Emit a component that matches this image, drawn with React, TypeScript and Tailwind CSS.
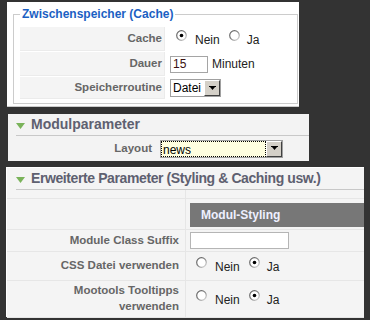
import React from 'react';

const labelCls =
  "text-[11.5px] font-bold text-[#666] font-['Liberation_Sans',Arial,sans-serif]";
const valueCls = "text-[12px] text-[#222] font-['Liberation_Sans',Arial,sans-serif]";

function Radio({ checked }: { checked?: boolean }) {
  return (
    <svg width="11" height="11" viewBox="0 0 11 11" className="shrink-0">
      <defs>
        <linearGradient id="rg" x1="0" y1="0" x2="1" y2="1">
          <stop offset="0" stopColor="#555" />
          <stop offset="0.55" stopColor="#888" />
          <stop offset="1" stopColor="#e6e6e6" />
        </linearGradient>
      </defs>
      <circle cx="5.5" cy="5.5" r="4.8" fill="#fff" stroke="url(#rg)" strokeWidth="1.2" />
      {checked && <circle cx="5.5" cy="5.5" r="1.8" fill="#000" />}
    </svg>
  );
}

function YesNo({ yes }: { yes: boolean }) {
  return (
    <div className={`flex items-start ${valueCls}`}>
      <Radio checked={!yes} />
      <span className="ml-[8px] mt-[4px] leading-[12px]">Nein</span>
      <span className="ml-[9px]">
        <Radio checked={yes} />
      </span>
      <span className="ml-[7px] mt-[4px] leading-[12px]">Ja</span>
    </div>
  );
}

function DropButton() {
  return (
    <div className="w-[16px] h-full bg-[#d4d0c8] border-t border-l border-t-white border-l-white border-b border-r border-b-[#404040] border-r-[#404040] flex items-center justify-center">
      <svg width="7" height="5" viewBox="0 0 7 5">
        <rect x="0" y="0" width="7" height="1" fill="#000" />
        <polygon points="1,1 6,1 3.5,4" fill="#000" />
      </svg>
    </div>
  );
}

function Toggler({ title, bold }: { title: string; bold?: boolean }) {
  return (
    <div className="h-[22px] border-b border-[#c8c8c8] flex items-center">
      <svg width="9" height="6" viewBox="0 0 9 6" className="mt-[2px]">
        <polygon points="0,0 9,0 4.5,6" fill="#7ab35a" />
      </svg>
      <span
        className={`ml-[6px] text-[14px] text-[#5e6070] font-['Liberation_Sans',Arial,sans-serif] ${
          bold ? 'font-bold' : 'font-bold tracking-[-0.4px]'
        }`}
      >
        {title}
      </span>
    </div>
  );
}

function CacheRow({ label, h, children }: { label: string; h: string; children: React.ReactNode }) {
  return (
    <div className={`flex ${h} border-b border-white`}>
      <div
        className={`w-[145px] shrink-0 bg-[#f4f4f4] border-r border-b border-[#ebebeb] flex items-center justify-end pr-[2px] ${labelCls}`}
      >
        {label}
      </div>
      <div className="flex items-center">{children}</div>
    </div>
  );
}

function ParamRow({ label, h, children }: { label?: React.ReactNode; h: string; children?: React.ReactNode }) {
  return (
    <div className={`flex ${h}`}>
      <div
        className={`w-[179px] shrink-0 border-r border-b border-[#e6e6e6] flex items-center justify-end text-right pr-[6px] ${labelCls}`}
      >
        {label}
      </div>
      <div className="flex-1 border-b border-[#e6e6e6] flex items-center">{children}</div>
    </div>
  );
}

export default function App() {
  return (
    <div className="w-[370px] h-[320px] bg-[#333] overflow-hidden pt-[2px]">
      {/* Zwischenspeicher */}
      <div className="ml-[7px] w-[292px] h-[105px] bg-white border-b border-[#ccc] pt-[5px]">
        <fieldset className="ml-[6px] w-[285px] border border-[#ccc] px-[6px] pt-[6px] pb-[3px]">
          <legend className="px-[2px] ml-[0px] text-[12px] leading-[14px] font-bold text-[#1b5fc3] font-['Liberation_Sans',Arial,sans-serif]">
            Zwischenspeicher (Cache)
          </legend>
          <CacheRow label="Cache" h="h-[25px]">
            <div className="pl-[11px] -mt-[2px]">
              <YesNo yes={false} />
            </div>
          </CacheRow>
          <CacheRow label="Dauer" h="h-[25px]">
            <div className={`pl-[5px] flex items-center ${valueCls}`}>
              <div className="w-[38px] h-[17px] border border-[#a5a5a5] bg-white pl-[2px] leading-[15px] text-[#3a1010]">
                15
              </div>
              <span className="ml-[4px]">Minuten</span>
            </div>
          </CacheRow>
          <CacheRow label="Speicherroutine" h="h-[23px]">
            <div className={`ml-[5px] w-[51px] h-[18px] border border-[#a0a0a0] bg-white flex ${valueCls}`}>
              <span className="flex-1 pl-[2px] leading-[16px] text-black">Datei</span>
              <DropButton />
            </div>
          </CacheRow>
        </fieldset>
      </div>

      {/* Modulparameter */}
      <div className="ml-[8px] mt-[7px] w-[301px] bg-[#f3f3f3] pl-[8px] pr-0">
        <Toggler title="Modulparameter" bold />
      </div>
      <div className="ml-[8px] w-[301px] h-[25px] bg-[#f3f3f3] flex items-center">
        <div className={`w-[148px] text-right pr-[4px] ${labelCls}`}>Layout</div>
        <div className={`ml-[4px] w-[123px] h-[18px] border border-[#a0a0a0] flex bg-[#ffffe0] ${valueCls}`}>
          <span className="flex-1 border border-dotted border-black leading-[14px] pl-[1px] pt-[1px] text-black">
            news
          </span>
          <DropButton />
        </div>
      </div>

      {/* Erweiterte Parameter */}
      <div className="ml-[6px] mt-[6px] w-[358px] h-[150px] bg-[#f4f4f4] border-l border-t border-white">
        <div className="pl-[9px]">
          <Toggler title="Erweiterte Parameter (Styling & Caching usw.)" />
        </div>
        <ParamRow h="h-[9px]" />
        <ParamRow h="h-[31px]">
          <div className="self-start ml-[4px] mt-[4px] flex-1 h-[24px] bg-[#777] flex items-center pl-[11px] text-[12px] font-bold text-[#eef0ff] font-['Liberation_Sans',Arial,sans-serif]">
            Modul-Styling
          </div>
        </ParamRow>
        <ParamRow label="Module Class Suffix" h="h-[22px]">
          <div className="ml-[4px] w-[99px] h-[17px] border border-[#b5b5b5] bg-white" />
        </ParamRow>
        <ParamRow label="CSS Datei verwenden" h="h-[29px]">
          <div className="pl-[10px] -mt-[2px]">
            <YesNo yes />
          </div>
        </ParamRow>
        <ParamRow
          label={
            <span className="leading-[16px] -mt-[2px]">
              Mootools Tooltipps
              <br />
              verwenden
            </span>
          }
          h="h-[37px]"
        >
          <div className="pl-[10px] -mt-[2px]">
            <YesNo yes />
          </div>
        </ParamRow>
      </div>
    </div>
  );
}
